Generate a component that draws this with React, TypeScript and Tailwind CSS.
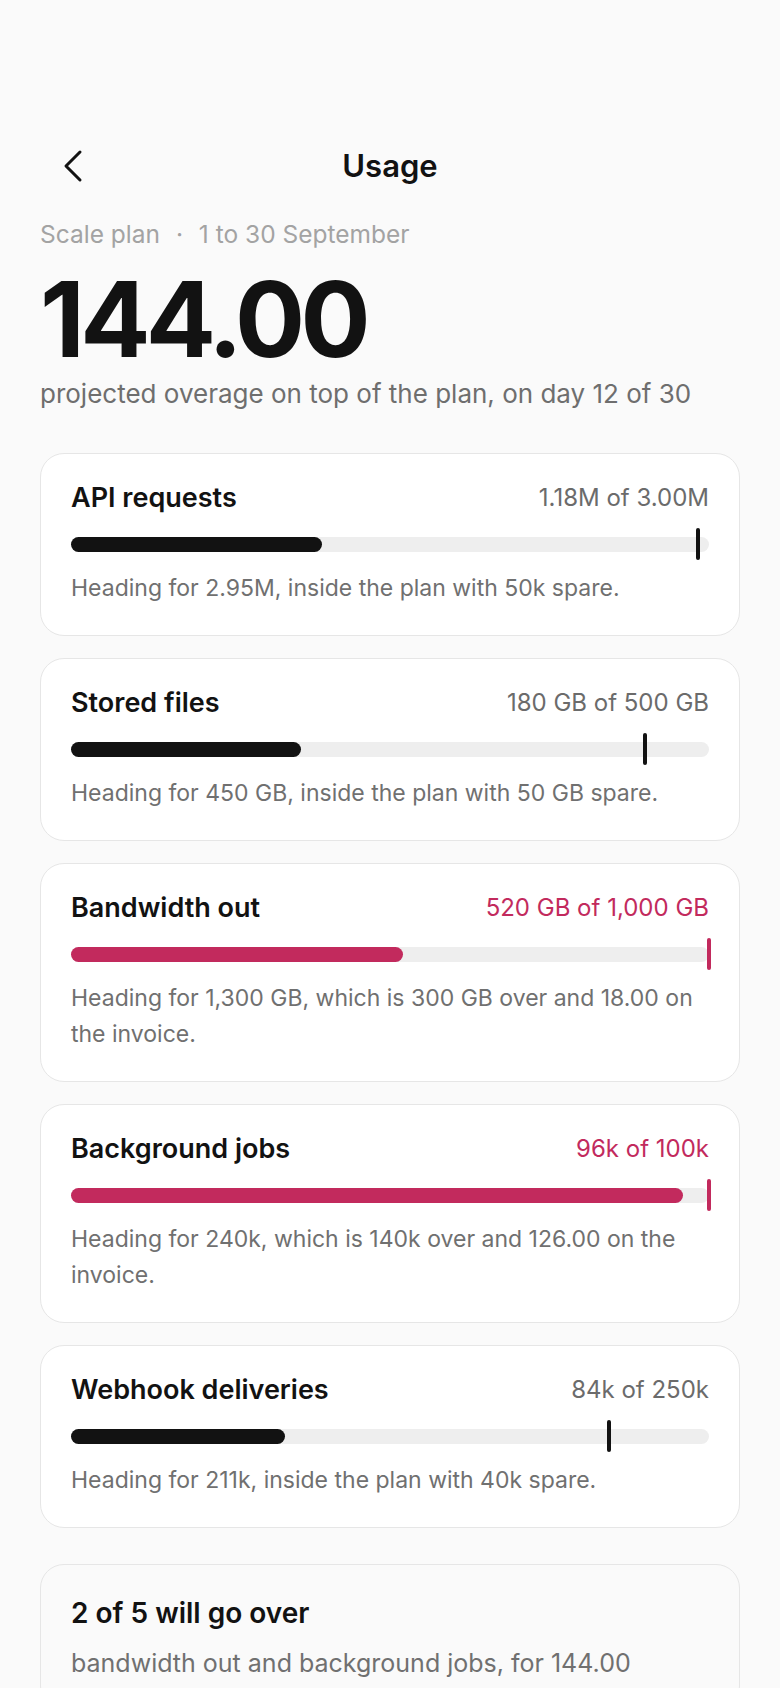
type Meter = {
  name: string;
  used: string;
  fill: number;
  mark: number;
  over: boolean;
  note: string;
};

const METERS: Meter[] = [
  {
    name: "API requests",
    used: "1.18M of 3.00M",
    fill: 39.3,
    mark: 98.3,
    over: false,
    note: "Heading for 2.95M, inside the plan with 50k spare.",
  },
  {
    name: "Stored files",
    used: "180 GB of 500 GB",
    fill: 36,
    mark: 90,
    over: false,
    note: "Heading for 450 GB, inside the plan with 50 GB spare.",
  },
  {
    name: "Bandwidth out",
    used: "520 GB of 1,000 GB",
    fill: 52,
    mark: 100,
    over: true,
    note: "Heading for 1,300 GB, which is 300 GB over and 18.00 on the invoice.",
  },
  {
    name: "Background jobs",
    used: "96k of 100k",
    fill: 96,
    mark: 100,
    over: true,
    note: "Heading for 240k, which is 140k over and 126.00 on the invoice.",
  },
  {
    name: "Webhook deliveries",
    used: "84k of 250k",
    fill: 33.6,
    mark: 84.4,
    over: false,
    note: "Heading for 211k, inside the plan with 40k spare.",
  },
];

function MeterCard({ meter }: { meter: Meter }) {
  return (
    <div className="rounded-[24px] border border-[#e6e6e6] bg-white px-[30px] pt-[28px] pb-[29px]">
      <div className="flex items-center justify-between">
        <h3 className="text-[27px] leading-[32px] font-semibold text-[#121212]">
          {meter.name}
        </h3>
        <span
          className={
            meter.over
              ? "text-[24px] leading-[32px] text-[#c22a5d]"
              : "text-[24px] leading-[32px] text-[#6b6b6b]"
          }
        >
          {meter.used}
        </span>
      </div>
      <div className="relative mt-[14px] flex h-8 items-center">
        <div className="h-[15px] w-full rounded-full bg-[#eeeeee]">
          <div
            className={
              meter.over
                ? "h-full rounded-full bg-[#c22a5d]"
                : "h-full rounded-full bg-[#121212]"
            }
            style={{ width: `${meter.fill}%` }}
          />
        </div>
        <div
          className={
            meter.over
              ? "absolute top-0 h-8 w-[4px] -translate-x-1/2 rounded-full bg-[#c22a5d]"
              : "absolute top-0 h-8 w-[4px] -translate-x-1/2 rounded-full bg-[#121212]"
          }
          style={{ left: `${meter.mark}%` }}
        />
      </div>
      <p className="mt-[10px] text-[23px] leading-[36px] text-[#707070]">
        {meter.note}
      </p>
    </div>
  );
}

export default function App() {
  return (
    <div className="min-h-screen bg-[#fafafa] px-10 pt-[140px] pb-10 font-['Inter',sans-serif] text-[#121212] [font-optical-sizing:none]">
      <header className="flex h-[52px] items-center justify-between">
        <button className="flex h-11 w-11 items-center justify-center text-[#121212]">
          <svg
            width="22"
            height="34"
            viewBox="0 0 22 34"
            fill="none"
            stroke="currentColor"
            strokeWidth="3"
            strokeLinecap="round"
            strokeLinejoin="round"
            className="ml-[22px]"
          >
            <polyline points="18,3 4,17 18,31" />
          </svg>
        </button>
        <h1 className="text-[31px] font-semibold">Usage</h1>
        <div className="h-11 w-11" />
      </header>

      <p className="mt-[28px] text-[24.5px] leading-[28px] text-[#a3a3a3]">
        Scale plan <span className="mx-[9px]">·</span> 1 to 30 September
      </p>
      <div className="mt-[19px] text-[104px] leading-[104px] font-bold tracking-[-0.045em] [font-optical-sizing:auto]">
        144.00
      </div>
      <p className="mt-[8px] text-[26px] leading-[30px] text-[#6e6e6e]">
        projected overage on top of the plan, on day 12 of 30
      </p>

      <div className="mt-[44px] flex flex-col gap-[22px]">
        {METERS.map((m) => (
          <MeterCard key={m.name} meter={m} />
        ))}
      </div>

      <div className="mt-[36px] rounded-[24px] border border-[#e6e6e6] px-[30px] pt-[32px] pb-[28px]">
        <h2 className="text-[28px] leading-[32px] font-semibold">
          2 of 5 will go over
        </h2>
        <p className="mt-[16px] text-[25px] leading-[36px] text-[#707070]">
          bandwidth out and background jobs, for 144.00
        </p>
      </div>
    </div>
  );
}
